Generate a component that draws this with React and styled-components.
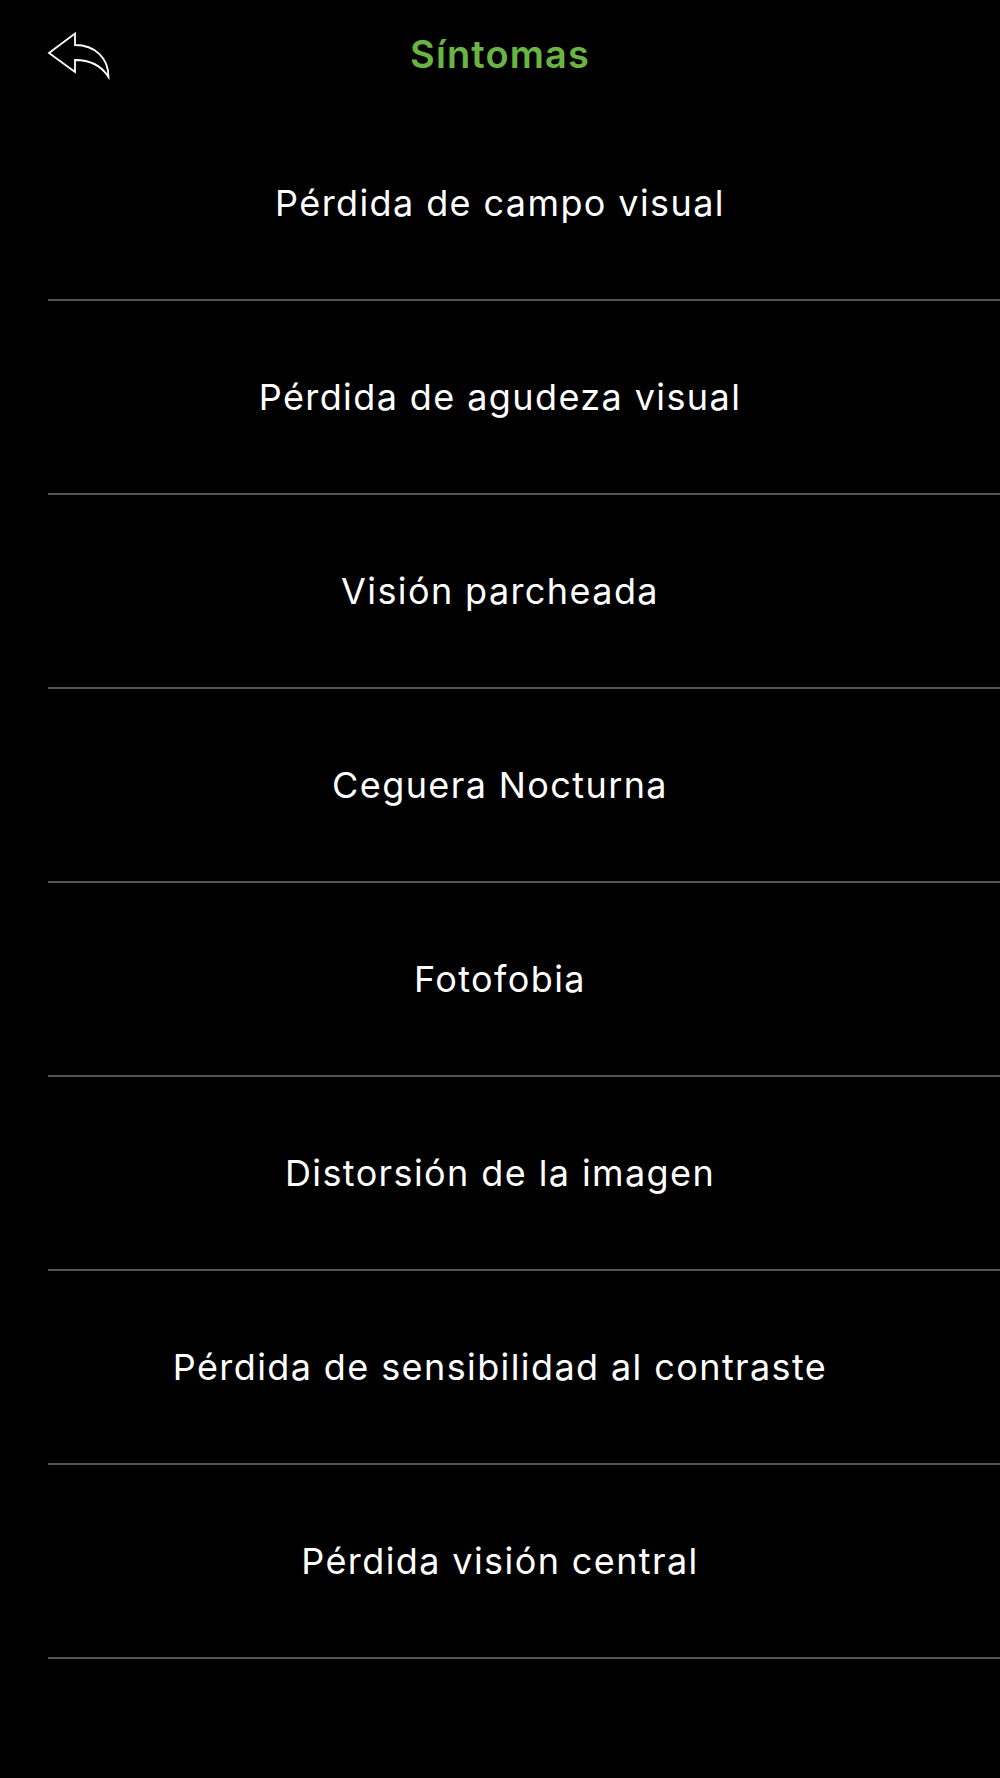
import styled, { createGlobalStyle } from "styled-components";

const GlobalStyle = createGlobalStyle`
  html, body {
    margin: 0;
    padding: 0;
    background: #000;
  }
  body {
    font-family: Inter, "Noto Sans", "Liberation Sans", sans-serif;
    -webkit-font-smoothing: antialiased;
  }
`;

const Screen = styled.div`
  min-height: 1778px;
  background: #000;
  color: #fff;
`;

const Header = styled.header`
  display: grid;
  grid-template-columns: 1fr auto 1fr;
  align-items: center;
  height: 107px;
  padding: 0 44px;
  box-sizing: border-box;
`;

const BackButton = styled.button`
  justify-self: start;
  display: flex;
  align-items: center;
  padding: 0;
  margin-top: 2px;
  border: none;
  background: none;
  cursor: pointer;
`;

const Title = styled.h1`
  margin: 0;
  font-size: 38px;
  line-height: 1;
  font-weight: 600;
  color: #6ab443;
  letter-spacing: 1.1px;
`;

const List = styled.ul`
  list-style: none;
  margin: 0;
  padding: 0;
`;

const Row = styled.li`
  display: flex;
  align-items: center;
  justify-content: center;
  height: 192px;
  margin-left: 48px;
  padding-right: 48px;
  border-bottom: 2px solid #555;
  font-size: 36px;
  line-height: 1;
  font-weight: 400;
  letter-spacing: 1.4px;
  color: #fff;
  cursor: pointer;
`;

function BackIcon() {
  return (
    <svg width="70" height="54" viewBox="44 26 70 54" fill="none">
      <path
        d="M49 51 L75 31.5 L75 43 C95 43 108.5 56 108.5 75 C101 63 90 58 75 58 L75 70 Z"
        stroke="#fff"
        strokeWidth="1.8"
        strokeLinejoin="miter"
      />
    </svg>
  );
}

const symptoms = [
  "Pérdida de campo visual",
  "Pérdida de agudeza visual",
  "Visión parcheada",
  "Ceguera Nocturna",
  "Fotofobia",
  "Distorsión de la imagen",
  "Pérdida de sensibilidad al contraste",
  "Pérdida visión central",
];

export default function App() {
  return (
    <Screen>
      <GlobalStyle />
      <Header>
        <BackButton aria-label="Volver">
          <BackIcon />
        </BackButton>
        <Title>Síntomas</Title>
        <span />
      </Header>
      <List>
        {symptoms.map((s) => (
          <Row key={s}>{s}</Row>
        ))}
      </List>
    </Screen>
  );
}
